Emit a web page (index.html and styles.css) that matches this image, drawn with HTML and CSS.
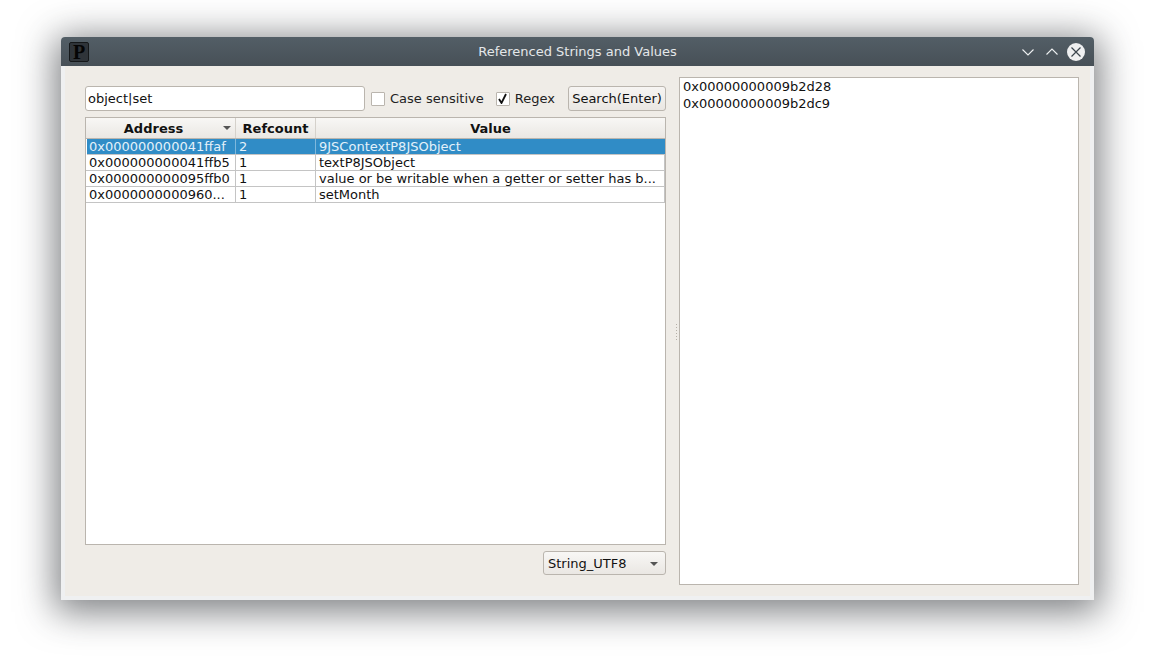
FILE: index.html
```html
<!DOCTYPE html>
<html>
<head>
<meta charset="utf-8">
<title>Referenced Strings and Values</title>
<link rel="stylesheet" href="styles.css">
</head>
<body>
<div class="window">
	<div class="titlebar">
		<div class="appIcon">P</div>
		<div class="title">Referenced Strings and Values</div>
		<div class="winBtns">
			<svg width="14" height="10" viewBox="0 0 14 10"><path d="M1.500 2.500L7 8L12.500 2.500" fill="none" stroke="#eef0f1" stroke-width="1.100"/></svg>
			<svg width="14" height="10" viewBox="0 0 14 10"><path d="M1.500 7.500L7 2L12.500 7.500" fill="none" stroke="#eef0f1" stroke-width="1.100"/></svg>
			<svg class="closeBtn" width="18" height="18" viewBox="0 0 18 18"><circle cx="9" cy="9" r="9" fill="#eff0f1"/><path d="M4.500 4.500L13.500 13.500M13.500 4.500L4.500 13.500" stroke="#3b454d" stroke-width="1.200"/></svg>
		</div>
	</div>
	<div class="content">
		<div class="leftPane">
			<div class="searchBar">
				<div class="searchInput">object|set</div>
				<label class="check"><span class="box"></span>Case sensitive</label>
				<label class="check regex"><span class="box"><svg width="11" height="11" viewBox="0 0 11 11"><path d="M2 6L4.500 10L9 1" fill="none" stroke="#111" stroke-width="1.800"/></svg></span>Regex</label>
				<div class="btn">Search(Enter)</div>
			</div>
			<div class="table">
				<div class="row head">
					<div class="cell addr">Address<i class="sortArrow"></i></div>
					<div class="cell count">Refcount</div>
					<div class="cell val">Value</div>
				</div>
				<div class="row active">
					<div class="cell addr">0x000000000041ffaf</div>
					<div class="cell count">2</div>
					<div class="cell val">9JSContextP8JSObject</div>
				</div>
				<div class="row">
					<div class="cell addr">0x000000000041ffb5</div>
					<div class="cell count">1</div>
					<div class="cell val">textP8JSObject</div>
				</div>
				<div class="row">
					<div class="cell addr">0x000000000095ffb0</div>
					<div class="cell count">1</div>
					<div class="cell val">value or be writable when a getter or setter has b...</div>
				</div>
				<div class="row">
					<div class="cell addr">0x0000000000960...</div>
					<div class="cell count">1</div>
					<div class="cell val">setMonth</div>
				</div>
			</div>
			<div class="bottomBar">
				<div class="combo">String_UTF8<i class="comboArrow"></i></div>
			</div>
		</div>
		<div class="splitter"><i></i><i></i><i></i><i></i><i></i><i></i></div>
		<div class="rightPane">
			<div>0x00000000009b2d28</div>
			<div>0x00000000009b2dc9</div>
		</div>
	</div>
</div>
</body>
</html>
```
FILE: styles.css
```css
html,body{
	margin:0;
	height:100%;
	background:#fff;
	overflow:hidden;
}
body{
	padding:37px 0 0 61px;
	box-sizing:border-box;
	font-family:"DejaVu Sans",sans-serif;
	font-size:13px;
	color:#111;
}
.window{
	width:1033px;
	height:563px;
	display:flex;
	flex-direction:column;
	border-radius:4px 4px 0 0;
	box-shadow:0 6px 36px 6px rgba(40,44,48,.6);
	background:#eff0f1;
}
.titlebar{
	height:29px;
	flex:none;
	display:flex;
	align-items:center;
	position:relative;
	border-radius:4px 4px 0 0;
	background:linear-gradient(#535e66,#475057);
}
.appIcon{
	width:18px;
	height:18px;
	margin-left:8px;
	border:1px solid #15181a;
	border-radius:2px;
	background:#2f3439;
	color:#050505;
	font-family:"Liberation Serif",serif;
	font-weight:bold;
	font-size:20px;
	line-height:18px;
	text-align:center;
}
.title{
	position:absolute;
	left:0;
	right:0;
	text-align:center;
	color:#e4e7e9;
}
.winBtns{
	margin-left:auto;
	margin-right:9px;
	display:flex;
	align-items:center;
	gap:10px;
}
.closeBtn{
	margin-left:-2px;
}
.content{
	flex:1;
	display:flex;
	margin:0 4px 4px 4px;
	padding:11px 11px 11px 20px;
	background:#efece7;
}
.leftPane{
	width:581px;
	display:flex;
	flex-direction:column;
}
.searchBar{
	height:25px;
	margin-top:9px;
	display:flex;
	align-items:center;
}
.searchInput{
	width:276px;
	height:23px;
	padding-left:2px;
	line-height:23px;
	background:#fff;
	border:1px solid #bab5ae;
	border-radius:3px;
	margin-right:6px;
	flex:none;
}
.check{
	display:flex;
	align-items:center;
	color:#222;
	white-space:nowrap;
}
.regex{
	margin-left:12px;
}
.box{
	width:12px;
	height:12px;
	margin-right:5px;
	display:flex;
	align-items:center;
	justify-content:center;
	background:#fff;
	border:1px solid #bab5ae;
	border-radius:1px;
}
.btn{
	margin-left:auto;
	width:96px;
	height:23px;
	line-height:23px;
	text-align:center;
	border:1px solid #bab5ae;
	border-radius:3px;
	background:linear-gradient(#f6f4f2,#eae7e3);
	white-space:nowrap;
}
.table{
	margin-top:6px;
	height:426px;
	background:#fff;
	border:1px solid #bab5ae;
}
.row{
	display:flex;
	height:15px;
	line-height:15px;
	border-bottom:1px solid #c4c4c4;
}
.cell{
	box-sizing:border-box;
	padding-left:3px;
	border-right:1px solid #c4c4c4;
	white-space:nowrap;
	overflow:hidden;
}
.addr{
	width:150px;
}
.count{
	width:80px;
}
.val{
	flex:1;
}
.head{
	height:20px;
	line-height:21px;
	border-bottom:1px solid #bab5ae;
	background:linear-gradient(#f8f7f5,#eae7e3);
	font-weight:bold;
}
.head .cell{
	padding:0;
	text-align:center;
	position:relative;
	border-right-color:#d5d1cb;
}
.head .val{
	border-right:0;
}
.head .addr{
	padding-right:14px;
}
.sortArrow{
	position:absolute;
	right:4px;
	top:8px;
	border:4px solid transparent;
	border-top:4px solid #555;
	border-bottom:0;
}
.active{
	margin:0 0 0 1px;
	width:578px;
	background:#308cc6;
	color:#e3f1fa;
}
.active .addr{
	width:149px;
	padding-left:2px;
}
.active .cell{
	border-right-color:#7fb8dc;
}
.active .val{
	border-right:0;
}
.bottomBar{
	display:flex;
	justify-content:flex-end;
	margin-top:6px;
}
.combo{
	box-sizing:border-box;
	width:123px;
	height:24px;
	line-height:23px;
	padding-left:4px;
	position:relative;
	border:1px solid #bab5ae;
	border-radius:3px;
	background:linear-gradient(#f8f7f5,#eae7e3);
}
.comboArrow{
	position:absolute;
	right:7px;
	top:10px;
	border:4px solid transparent;
	border-top:4px solid #555;
	border-bottom:0;
}
.splitter{
	width:13px;
	padding:1px 0 0 7px;
	box-sizing:border-box;
	display:flex;
	flex-direction:column;
	justify-content:center;
	align-items:center;
	gap:2px;
}
.splitter i{
	width:1px;
	height:1px;
	background:#b5b0a8;
}
.rightPane{
	flex:1;
	padding:0 3px;
	line-height:17px;
	background:#fff;
	border:1px solid #bab5ae;
}
```
